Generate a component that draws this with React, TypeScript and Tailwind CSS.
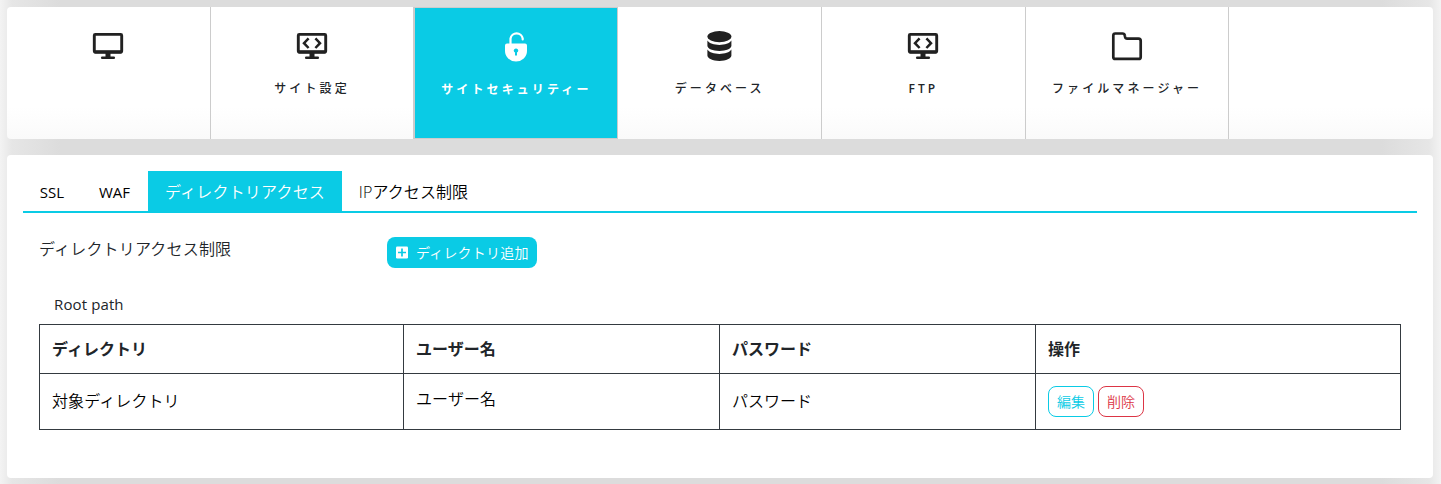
import React from "react";

const INK = "#212121";

function Monitor({ code = false }: { code?: boolean }) {
  return (
    <svg width="32" height="32" viewBox="0 0 32 32" fill="none" stroke={INK}>
      <rect x="2.3" y="4.4" width="27.4" height="17.9" rx="1" strokeWidth="2.9" />
      <path d="M2 21.800h28" strokeWidth="3" />
      <path d="M13.5 23h5v4h-5z" fill={INK} stroke="none" />
      <path d="M10.2 27.700h11.600" strokeWidth="2.500" strokeLinecap="round" />
      {code && (
        <path d="M12.600 8.400L8 13.200L12.600 18M19.400 8.400L24 13.200L19.400 18" strokeWidth="2.500" />
      )}
    </svg>
  );
}

function Unlock() {
  return (
    <svg width="32" height="32" viewBox="0 0 32 32" fill="none">
      <path d="M10.500 14V8.500a6.200 6.200 0 0 1 12.200 0v1" stroke="#fff" strokeWidth="2.200" strokeLinecap="round" />
      <path
        fill="#fff"
        fillRule="evenodd"
        d="M7 13.500h18a2 2 0 0 1 2 2v5.500a11 10.500 0 0 1-22 0v-5.500a2 2 0 0 1 2-2zM16 18.500a2.100 2.100 0 0 0-1 4v3h2v-3a2.100 2.100 0 0 0-1-4z"
      />
    </svg>
  );
}

function Database() {
  return (
    <svg width="32" height="32" viewBox="0.6 0 32 32" fill={INK}>
      <ellipse cx="16" cy="6.600" rx="12" ry="5.600" />
      <path d="M4 10.600c2 3 6.600 4.300 12 4.300s10-1.300 12-4.300v5.200c0 3-5.400 5.200-12 5.200s-12-2.200-12-5.200z" />
      <path d="M4 19.600c2 3 6.600 4.300 12 4.300s10-1.300 12-4.300v6c0 3-5.400 5.400-12 5.400s-12-2.400-12-5.400z" />
    </svg>
  );
}

function Folder() {
  return (
    <svg width="32" height="32" viewBox="0 0 32 32" fill="none" stroke={INK} strokeWidth="2.700" strokeLinejoin="round">
      <path d="M4.300 3.500H11.500q2 0 2.300 2l.3 1.500q.4 1.700 2 1.700h11.400q2.200 0 2.200 2.200v16q0 2-2 2H4.300q-2 0-2-2V5.500q0-2 2-2z" />
    </svg>
  );
}

function PlusSquare() {
  return (
    <svg width="12" height="13" viewBox="0 0 12 13">
      <rect y="0.500" width="12" height="12" rx="1.300" fill="#fff" />
      <path d="M6 2.500v8M2 6.500h8" stroke="#0acbe5" strokeWidth="1.700" />
    </svg>
  );
}

const items = [
  { label: "", icon: <Monitor />, width: "w-[203.7px]", text: "" },
  { label: "サイト設定", icon: <Monitor code />, width: "w-[203.7px]", text: "mt-[18px] font-medium" },
  { label: "サイトセキュリティー", icon: <Unlock />, width: "w-[204px]", text: "mt-[19px] font-semibold", active: true },
  { label: "データベース", icon: <Database />, width: "w-[203.7px]", text: "mt-[18px] font-medium" },
  { label: "FTP", icon: <Monitor code />, width: "w-[203.7px]", text: "mt-[18px] font-semibold" },
  { label: "ファイルマネージャー", icon: <Folder />, width: "w-[203.6px]", text: "mt-[18px] font-medium" },
];

const tabs = [
  { label: "SSL", style: "w-[58px] text-[15px] font-normal" },
  { label: "WAF", style: "w-[67px] text-[15px] font-normal" },
  { label: "ディレクトリアクセス", style: "w-[194px] bg-[#0acbe5] tracking-[0.2px] text-white" },
  { label: "IPアクセス制限", style: "w-[143px] tracking-[0.1px]" },
];

const headers = ["ディレクトリ", "ユーザー名", "パスワード", "操作"];

export default function App() {
  return (
    <div className="flex h-[484px] w-[1441px] flex-col gap-4 overflow-hidden bg-[linear-gradient(90deg,#f3f3f3_0px,#e6e6e6_12px,#dcdcdc_60px,#dcdcdc_1381px,#e6e6e6_1429px,#f3f3f3_1441px)] pt-[7px] pr-2 pl-[7px] font-['Open_Sans','Noto_Sans_CJK_JP',sans-serif] font-[350] text-[#212529]">
      <nav className="flex h-[132px] shrink-0 overflow-hidden rounded bg-[linear-gradient(180deg,#fff_100px,#fafafa_132px)]">
        {items.map((it, i) => (
          <a
            key={i}
            className={`flex ${it.width} shrink-0 flex-col items-center ${
              it.active ? "border border-[#ccc] bg-[#0acbe5] pt-[22px] text-white" : "border-r border-[#ccc] pt-[23px]"
            }`}
          >
            {it.icon}
            <span className={`text-[12px] leading-[18px] tracking-[3.1px] whitespace-nowrap ${it.text}`}>
              {it.label}
            </span>
          </a>
        ))}
      </nav>
      <main className="h-[323px] shrink-0 rounded bg-white px-4 pt-4">
        <div className="flex h-[42px] border-b-2 border-[#0acbe5] text-[16px] text-black">
          {tabs.map((t) => (
            <a
              key={t.label}
              className={`flex h-10 items-center justify-center pt-0.5 whitespace-nowrap ${t.style}`}
            >
              {t.label}
            </a>
          ))}
        </div>
        <div className="flex px-4 pt-6">
          <div className="w-[348px] text-[16px] leading-6 tracking-[0.18px]">ディレクトリアクセス制限</div>
          <button className="flex h-[31px] w-[150px] items-center gap-2 rounded-lg bg-[#0acbe5] pl-[9px] text-[14px] tracking-[0.2px] whitespace-nowrap text-white">
            <PlusSquare />
            ディレクトリ追加
          </button>
        </div>
        <div className="mt-6 pl-[31px] text-[15px] leading-6 font-normal tracking-[0.12px]">Root path</div>
        <table className="mt-2 ml-4 w-[1361px] table-fixed border-collapse text-left text-[16px]">
          <colgroup>
            <col className="w-[364px]" />
            <col className="w-[316px]" />
            <col className="w-[316px]" />
            <col className="w-[365px]" />
          </colgroup>
          <thead>
            <tr className="h-[49px]">
              {headers.map((h) => (
                <th key={h} className="border border-[#343a40] px-3 py-0 font-bold">
                  {h}
                </th>
              ))}
            </tr>
          </thead>
          <tbody>
            <tr className="h-[56px] text-black">
              <td className="border border-[#343a40] px-3 pt-0 pb-0.5 tracking-[0.1px]">対象ディレクトリ</td>
              <td className="border border-[#343a40] px-3 pt-0 pb-1.5 tracking-[0.1px]">ユーザー名</td>
              <td className="border border-[#343a40] px-3 pt-0 pb-0.5">パスワード</td>
              <td className="border border-[#343a40] px-3 py-0">
                <div className="flex gap-1 text-[14px]">
                  <button className="h-[31px] w-[46px] rounded-lg border border-[#0acbe5] text-[#0acbe5]">編集</button>
                  <button className="h-[31px] w-[46px] rounded-lg border border-[#dc3545] text-[#dc3545]">削除</button>
                </div>
              </td>
            </tr>
          </tbody>
        </table>
      </main>
    </div>
  );
}
